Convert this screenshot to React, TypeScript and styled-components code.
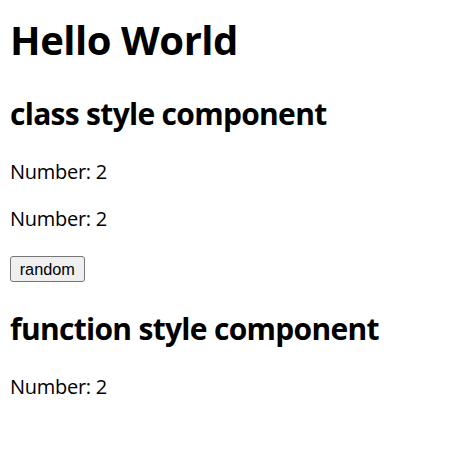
import React, { useState } from "react";
import styled, { createGlobalStyle } from "styled-components";

const GlobalStyle = createGlobalStyle`
  html, body {
    margin: 0;
    padding: 0;
    background: #ffffff;
  }
  body {
    font-family: "Open Sans", "Noto Sans", "Noto Sans CJK KR", sans-serif;
    color: #000000;
  }
`;

const Page = styled.div`
  padding: 13px 10px 0;
`;

const Title = styled.h1`
  margin: 0 0 27.5px;
  font-size: 40px;
  line-height: 53.33px;
  font-weight: 700;
  letter-spacing: -0.45px;
`;

const SectionTitle = styled.h2`
  margin: 25px 0;
  font-size: 30px;
  line-height: 40px;
  font-weight: 700;
  letter-spacing: -0.7px;
`;

const Line = styled.p`
  margin: 20px 0;
  font-size: 20px;
  line-height: 26.67px;
  letter-spacing: -0.27px;
`;

const ButtonRow = styled.div`
  display: flex;
  align-items: flex-start;
  padding: 3.8px 0 2px;
`;

const RandomButton = styled.button`
  box-sizing: border-box;
  height: 26px;
  padding: 0 8.7px;
  border: 1px solid #767676;
  border-radius: 3px;
  background: #efefef;
  color: #000000;
  font-family: "Liberation Sans", Arial, sans-serif;
  font-size: 16.3px;
  line-height: 24px;
  cursor: default;
`;

function ClassStyleComponent() {
  const [num, setNum] = useState(2);
  return (
    <section>
      <SectionTitle>class style component</SectionTitle>
      <Line>Number: {num}</Line>
      <Line>Number: {num}</Line>
      <ButtonRow>
        <RandomButton onClick={() => setNum(Math.floor(Math.random() * 10))}>random</RandomButton>
      </ButtonRow>
    </section>
  );
}

function FunctionStyleComponent() {
  const [num] = useState(2);
  return (
    <section>
      <SectionTitle>function style component</SectionTitle>
      <Line>Number: {num}</Line>
    </section>
  );
}

export default function App() {
  return (
    <>
      <GlobalStyle />
      <Page>
        <Title>Hello World</Title>
        <ClassStyleComponent />
        <FunctionStyleComponent />
      </Page>
    </>
  );
}
